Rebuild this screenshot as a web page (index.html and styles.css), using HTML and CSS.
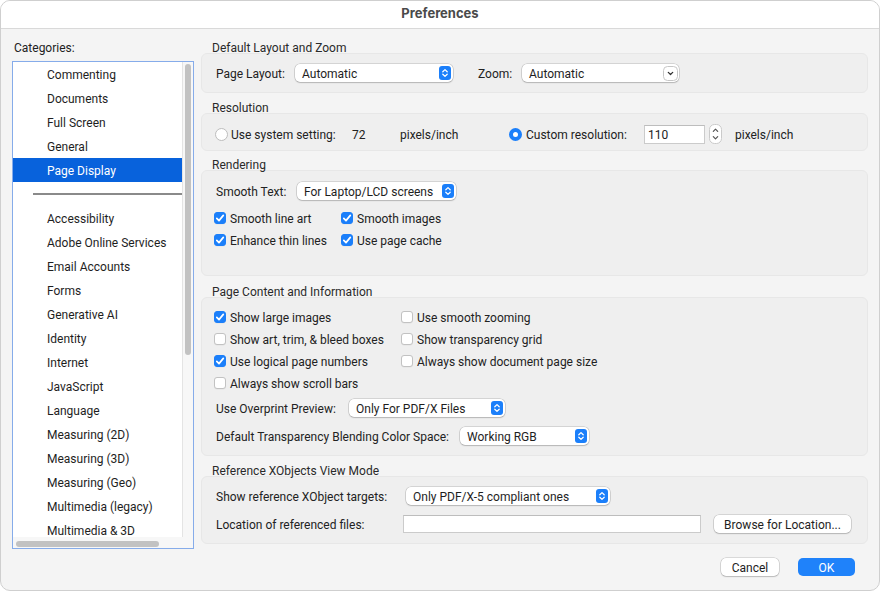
FILE: index.html
```html
<!DOCTYPE html>
<html lang="en">
<head>
  <meta charset="UTF-8">
  <title>Preferences</title>
  <link rel="stylesheet" href="styles.css">
</head>
<body>
  <div class="window">
    <div class="titlebar">Preferences</div>

    <div class="body">
      <div class="sidebar">
        <div class="cat-label">Categories:</div>
        <div class="list">
          <div class="list-items">
            <div class="item">Commenting</div>
            <div class="item">Documents</div>
            <div class="item">Full Screen</div>
            <div class="item">General</div>
            <div class="item selected">Page Display</div>
            <div class="sep"></div>
            <div class="item">Accessibility</div>
            <div class="item">Adobe Online Services</div>
            <div class="item">Email Accounts</div>
            <div class="item">Forms</div>
            <div class="item">Generative AI</div>
            <div class="item">Identity</div>
            <div class="item">Internet</div>
            <div class="item">JavaScript</div>
            <div class="item">Language</div>
            <div class="item">Measuring (2D)</div>
            <div class="item">Measuring (3D)</div>
            <div class="item">Measuring (Geo)</div>
            <div class="item">Multimedia (legacy)</div>
            <div class="item">Multimedia &amp; 3D</div>
          </div>
          <div class="vscroll"><div class="thumb"></div></div>
          <div class="hscroll"><div class="thumb"></div></div>
        </div>
      </div>

      <div class="main">
        <div class="section-title">Default Layout and Zoom</div>
        <div class="group g-layout">
          <div class="row">
            <span class="lbl w-pagelayout">Page Layout:</span>
            <div class="popup w-158">
              <span>Automatic</span>
              <svg class="arrows" viewBox="0 0 12 14"><rect width="12" height="14" rx="3" fill="#1b7ffa"/><path d="M3.8 5.7 6 3.6 8.2 5.7M3.8 8.3 6 10.4 8.2 8.3" fill="none" stroke="#fff" stroke-width="1.3" stroke-linecap="round" stroke-linejoin="round"/></svg>
            </div>
            <span class="lbl w-zoom">Zoom:</span>
            <div class="popup combo w-157">
              <span>Automatic</span>
              <svg class="chev" viewBox="0 0 15 15"><rect x="0.5" y="0.5" width="14" height="14" rx="4" fill="#fff" stroke="#c6c6c6"/><path d="M5.3 6.4 7.5 8.5 9.7 6.4" fill="none" stroke="#333" stroke-width="1.3" stroke-linecap="round" stroke-linejoin="round"/></svg>
            </div>
          </div>
        </div>

        <div class="section-title">Resolution</div>
        <div class="group g-res">
          <div class="row row-res">
            <span class="radio"></span>
            <span class="txt w-system">Use system setting:</span>
            <span class="txt w-72">72</span>
            <span class="txt w-ppi">pixels/inch</span>
            <span class="radio on"></span>
            <span class="txt w-custom">Custom resolution:</span>
            <div class="field w-61">110</div>
            <svg class="stepper" viewBox="0 0 13 20"><rect x="0.5" y="0.5" width="12" height="19" rx="5" fill="#fff" stroke="#cacaca"/><path d="M4.3 7.4 6.5 5.2 8.7 7.4M4.3 12.6 6.5 14.8 8.7 12.6" fill="none" stroke="#555" stroke-width="1.2" stroke-linecap="round" stroke-linejoin="round"/></svg>
            <span class="txt ppi-2">pixels/inch</span>
          </div>
        </div>

        <div class="section-title">Rendering</div>
        <div class="group g-render">
          <div class="row">
            <span class="lbl w-smooth">Smooth Text:</span>
            <div class="popup w-159">
              <span>For Laptop/LCD screens</span>
              <svg class="arrows" viewBox="0 0 12 14"><rect width="12" height="14" rx="3" fill="#1b7ffa"/><path d="M3.8 5.7 6 3.6 8.2 5.7M3.8 8.3 6 10.4 8.2 8.3" fill="none" stroke="#fff" stroke-width="1.3" stroke-linecap="round" stroke-linejoin="round"/></svg>
            </div>
          </div>
          <div class="checks">
            <div class="check-row">
              <label class="check col-render on"><span class="box"></span><span class="ct">Smooth line art</span></label>
              <label class="check on"><span class="box"></span><span class="ct">Smooth images</span></label>
            </div>
            <div class="check-row">
              <label class="check col-render on"><span class="box"></span><span class="ct">Enhance thin lines</span></label>
              <label class="check on"><span class="box"></span><span class="ct">Use page cache</span></label>
            </div>
          </div>
        </div>

        <div class="section-title">Page Content and Information</div>
        <div class="group g-content">
          <div class="check-row">
            <label class="check col-content on"><span class="box"></span><span class="ct">Show large images</span></label>
            <label class="check"><span class="box"></span><span class="ct">Use smooth zooming</span></label>
          </div>
          <div class="check-row">
            <label class="check col-content"><span class="box"></span><span class="ct">Show art, trim, &amp; bleed boxes</span></label>
            <label class="check"><span class="box"></span><span class="ct">Show transparency grid</span></label>
          </div>
          <div class="check-row">
            <label class="check col-content on"><span class="box"></span><span class="ct">Use logical page numbers</span></label>
            <label class="check"><span class="box"></span><span class="ct">Always show document page size</span></label>
          </div>
          <div class="check-row">
            <label class="check col-content"><span class="box"></span><span class="ct">Always show scroll bars</span></label>
          </div>
          <div class="row row-tall">
            <span class="lbl w-overprint">Use Overprint Preview:</span>
            <div class="popup w-156">
              <span>Only For PDF/X Files</span>
              <svg class="arrows" viewBox="0 0 12 14"><rect width="12" height="14" rx="3" fill="#1b7ffa"/><path d="M3.8 5.7 6 3.6 8.2 5.7M3.8 8.3 6 10.4 8.2 8.3" fill="none" stroke="#fff" stroke-width="1.3" stroke-linecap="round" stroke-linejoin="round"/></svg>
            </div>
          </div>
          <div class="row row-tall">
            <span class="lbl w-blend">Default Transparency Blending Color Space:</span>
            <div class="popup w-129">
              <span>Working RGB</span>
              <svg class="arrows" viewBox="0 0 12 14"><rect width="12" height="14" rx="3" fill="#1b7ffa"/><path d="M3.8 5.7 6 3.6 8.2 5.7M3.8 8.3 6 10.4 8.2 8.3" fill="none" stroke="#fff" stroke-width="1.3" stroke-linecap="round" stroke-linejoin="round"/></svg>
            </div>
          </div>
        </div>

        <div class="section-title">Reference XObjects View Mode</div>
        <div class="group g-xobj">
          <div class="row row-tall">
            <span class="lbl w-targets">Show reference XObject targets:</span>
            <div class="popup w-204">
              <span>Only PDF/X-5 compliant ones</span>
              <svg class="arrows" viewBox="0 0 12 14"><rect width="12" height="14" rx="3" fill="#1b7ffa"/><path d="M3.8 5.7 6 3.6 8.2 5.7M3.8 8.3 6 10.4 8.2 8.3" fill="none" stroke="#fff" stroke-width="1.3" stroke-linecap="round" stroke-linejoin="round"/></svg>
            </div>
          </div>
          <div class="row row-tall">
            <span class="lbl w-location">Location of referenced files:</span>
            <div class="field w-298"></div>
            <button class="btn browse">Browse for Location...</button>
          </div>
        </div>
      </div>
    </div>

    <div class="footer">
      <button class="btn cancel">Cancel</button>
      <button class="btn ok">OK</button>
    </div>
  </div>
</body>
</html>
```

FILE: styles.css
```css
* {
  box-sizing: border-box;
}
body {
  margin: 0;
  background: #fff;
  font-family: Roboto, "Liberation Sans", sans-serif;
  font-size: 12px;
  color: #222;
}
.window {
  width: 880px;
  height: 591px;
  border: 1px solid #cfcfcf;
  border-radius: 10px;
  background: #f4f4f4;
  overflow: hidden;
  display: flex;
  flex-direction: column;
}
.titlebar {
  height: 28px;
  flex: none;
  background: #fff;
  border-bottom: 1px solid #d9d9d9;
  text-align: center;
  line-height: 25px;
  font-family: Inter, "Liberation Sans", sans-serif;
  font-size: 13px;
  font-weight: 700;
  color: #4a4a4a;
}
.body {
  height: 520px;
  flex: none;
  display: flex;
}
.footer {
  flex: 1;
  display: flex;
  justify-content: flex-end;
  align-items: flex-start;
  gap: 19px;
  padding: 9px 24px 0 0;
}

/* sidebar */
.sidebar {
  width: 182px;
  margin-left: 11px;
  padding-top: 10px;
}
.cat-label {
  line-height: 16px;
  padding-top: 1px;
  margin: 0 0 5px 2px;
}
.list {
  height: 488px;
  border: 1px solid #86acea;
  background: #fff;
  display: grid;
  grid-template-columns: 169px 11px;
  grid-template-rows: 475px 11px;
}
.list-items {
  overflow: hidden;
}
.item {
  height: 24px;
  line-height: 24px;
  padding-left: 34px;
  padding-top: 1px;
  white-space: nowrap;
  color: #1e1e1e;
}
.item.selected {
  background: #0862dc;
  color: #fff;
}
.sep {
  height: 24px;
  display: flex;
  align-items: center;
  padding-left: 20px;
}
.sep::before {
  content: "";
  flex: 1;
  height: 2px;
  background: #8a8a8a;
}
.vscroll {
  background: #f7f7f7;
  border-left: 1px solid #e4e4e4;
  padding: 2px 0 0 2px;
}
.vscroll .thumb {
  width: 6px;
  height: 291px;
  border-radius: 3px;
  background: #c2c2c2;
}
.hscroll {
  grid-column: 1 / 3;
  background: #f7f7f7;
  padding: 4px 0 0 3px;
}
.hscroll .thumb {
  width: 143px;
  height: 6px;
  border-radius: 3px;
  background: #c2c2c2;
}

/* main panel */
.main {
  width: 667px;
  margin-left: 7px;
  padding-top: 12px;
}
.section-title {
  height: 12px;
  line-height: 10px;
  padding: 2px 0 0 11px;
  white-space: nowrap;
  color: #2a2a2a;
}
.group {
  background: #efefef;
  border: 1px solid #e7e7e7;
  border-radius: 6px;
  padding: 0 13px;
}
.g-layout {
  height: 40px;
  padding-top: 10px;
  margin-bottom: 8px;
}
.g-res {
  height: 38px;
  padding-top: 10px;
  margin-bottom: 7px;
}
.g-render {
  height: 106px;
  padding-top: 11px;
  margin-bottom: 9px;
}
.g-content {
  height: 159px;
  padding-top: 8px;
  margin-bottom: 8px;
}
.g-xobj {
  height: 68px;
  padding-top: 5px;
}
.row {
  display: flex;
  align-items: center;
  height: 18px;
  white-space: nowrap;
}
.row-res {
  height: 20px;
}
.row-tall {
  height: 28px;
}
.lbl, .txt, .ct, .popup span {
  padding-top: 2px;
}
.lbl {
  flex: none;
  margin-left: 1px;
}
.txt {
  flex: none;
}
.w-pagelayout { width: 79px; }
.w-zoom { width: 44px; margin-left: 25px; }
.w-smooth { width: 81px; }
.w-overprint { width: 133px; }
.w-blend { width: 244px; }
.w-targets { width: 190px; }
.w-location { width: 187px; }
.w-system { width: 121px; margin-left: 3px; }
.w-72 { width: 48px; }
.w-ppi { width: 109px; }
.w-custom { width: 118px; margin-left: 4px; }
.ppi-2 { margin-left: 13px; }

/* popup buttons */
.popup {
  flex: none;
  height: 18px;
  background: #fff;
  border-radius: 5px;
  box-shadow: 0 0 0 0.5px rgba(0, 0, 0, 0.22), 0 1px 1.5px rgba(0, 0, 0, 0.14);
  display: flex;
  align-items: center;
  justify-content: space-between;
  padding: 0 2px 0 7px;
  color: #1e1e1e;
}
.popup .arrows {
  flex: none;
  width: 12px;
  height: 14px;
}
.combo {
  padding-right: 1px;
}
.combo .chev {
  flex: none;
  width: 15px;
  height: 15px;
}
.w-158 { width: 158px; }
.w-157 { width: 157px; }
.w-159 { width: 159px; }
.w-156 { width: 156px; }
.w-129 { width: 129px; }
.w-204 { width: 204px; }

/* text fields */
.field {
  flex: none;
  height: 19px;
  background: #fff;
  border: 1px solid #cbcbcb;
  border-top-color: #bdbdbd;
  padding: 1px 3px 0;
  line-height: 17px;
}
.w-61 { width: 61px; }
.w-298 { width: 298px; height: 18px; }
.stepper {
  flex: none;
  width: 13px;
  height: 20px;
  margin-left: 4px;
}

/* radios */
.radio {
  flex: none;
  width: 13px;
  height: 13px;
  border-radius: 50%;
  background: #fff;
  border: 1px solid #bdbdbd;
}
.radio.on {
  border: 4px solid #1b7ffa;
}

/* checkboxes */
.checks {
  margin-top: 7px;
}
.check-row {
  display: flex;
  height: 22px;
  align-items: center;
  white-space: nowrap;
}
.check {
  flex: none;
  display: flex;
  align-items: center;
  gap: 4px;
}
.col-render { width: 127px; margin-left: -1px; }
.col-content { width: 187px; margin-left: -1px; }
.box {
  flex: none;
  width: 12px;
  height: 12px;
  border-radius: 3px;
  background: #fff;
  border: 1px solid #c2c2c2;
  box-shadow: 0 0.5px 0.5px rgba(0, 0, 0, 0.06);
}
.check.on .box {
  background: #1b7ffa url("data:image/svg+xml,%3Csvg xmlns='http://www.w3.org/2000/svg' viewBox='0 0 12 12'%3E%3Cpath d='M2.8 6.3 5 8.6 9.3 3.4' fill='none' stroke='%23fff' stroke-width='1.7' stroke-linecap='round' stroke-linejoin='round'/%3E%3C/svg%3E") center / 12px 12px no-repeat;
  border-color: #1b7ffa;
}

/* buttons */
.btn {
  font: inherit;
  color: #1e1e1e;
  height: 18px;
  padding: 2px 0 0;
  border: none;
  border-radius: 5px;
  background: #fff;
  box-shadow: 0 0 0 0.5px rgba(0, 0, 0, 0.22), 0 1px 1.5px rgba(0, 0, 0, 0.14);
}
.browse {
  width: 137px;
  margin-left: 13px;
}
.cancel {
  width: 58px;
}
.ok {
  width: 57px;
  background: #1f82fa;
  color: #fff;
  box-shadow: none;
}
```
